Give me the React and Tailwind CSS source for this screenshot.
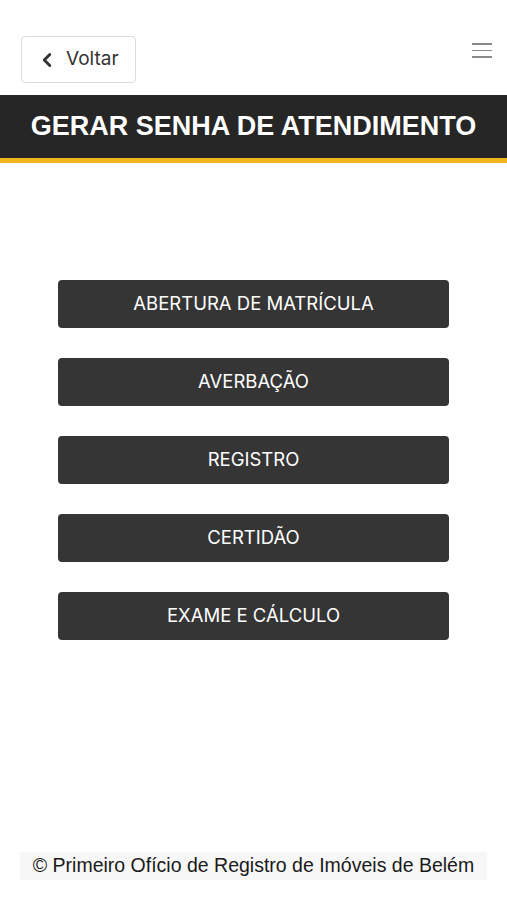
import { ChevronLeft } from "lucide-react";

const SERVICES = ["ABERTURA DE MATRÍCULA", "AVERBAÇÃO", "REGISTRO", "CERTIDÃO", "EXAME E CÁLCULO"];

export default function App() {
  return (
    <div className="flex min-h-[900px] w-[507px] flex-col bg-white font-['Liberation_Sans',Arial,sans-serif]">
      <div className="flex items-start justify-between pl-[21px] pr-[15px] pt-[36px]">
        <button className="flex h-[47px] w-[115px] items-center gap-[8px] rounded-[4px] border border-[#dcdcdc] bg-white pl-[14px] text-[19px] text-[#333] font-['Inter',sans-serif]">
          <ChevronLeft className="h-[22px] w-[22px]" strokeWidth={3.2} />
          Voltar
        </button>
        <div className="mt-[7px] flex w-[20px] flex-col gap-[5px]">
          <span className="h-[1.5px] bg-[#8a8a8a]" />
          <span className="h-[1.5px] bg-[#8a8a8a]" />
          <span className="h-[1.5px] bg-[#8a8a8a]" />
        </div>
      </div>

      <div className="mt-[12px] border-b-[5px] border-[#f2b51b] bg-[#262626]">
        <h1 className="flex h-[63px] items-center justify-center text-[27px] font-bold text-white">
          GERAR SENHA DE ATENDIMENTO
        </h1>
      </div>

      <div className="mt-[117px] flex flex-col gap-[30px] px-[58px]">
        {SERVICES.map((s) => (
          <button
            key={s}
            className="h-[48px] w-full rounded-[4px] bg-[#353535] text-[18.5px] text-white font-['Inter',sans-serif]"
          >
            {s}
          </button>
        ))}
      </div>

      <div className="mx-[20px] mb-[20px] mt-auto flex h-[28px] items-center justify-center bg-[#f7f7f7] text-[19.5px] text-[#1a1a1a]">
        © Primeiro Ofício de Registro de Imóveis de Belém
      </div>
    </div>
  );
}
